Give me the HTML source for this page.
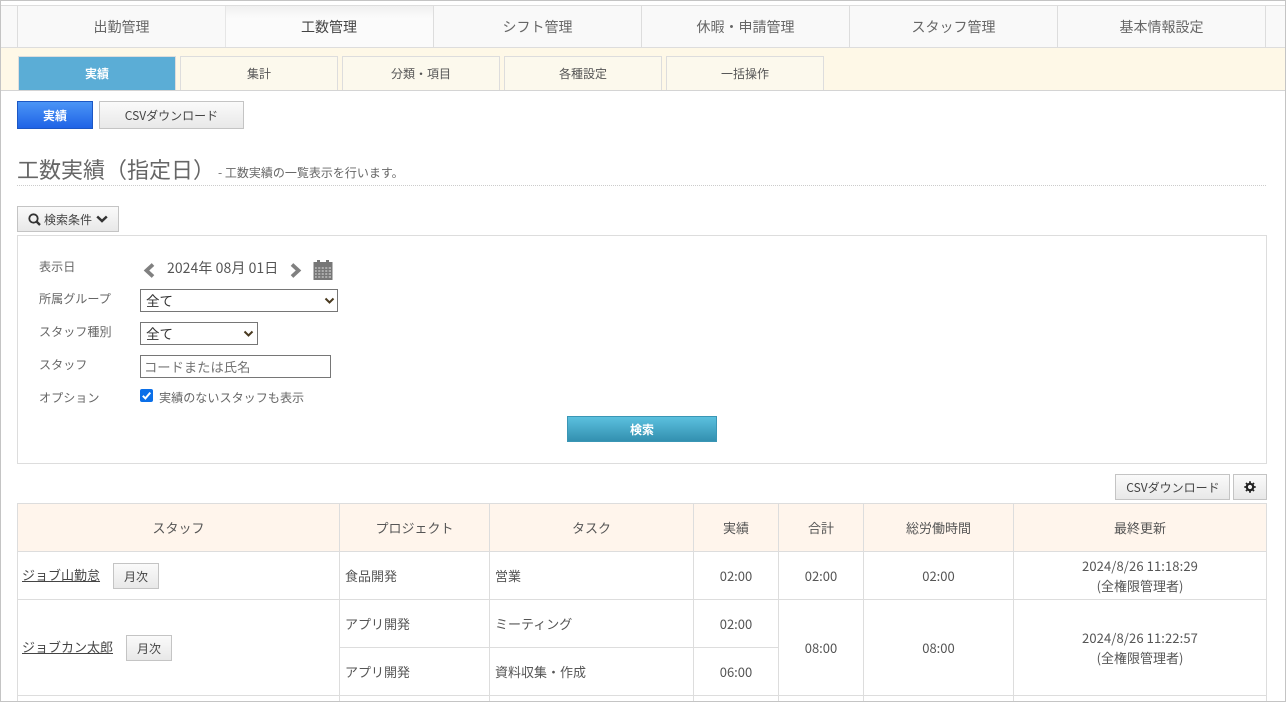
<!DOCTYPE html>
<html lang="ja"><head><meta charset="utf-8"><title>工数実績</title>
<style>
html,body{margin:0;padding:0;background:#fff}
#p{position:relative;width:1286px;height:702px;overflow:hidden;background:#fff;font-family:"Noto Sans CJK JP","Liberation Sans",sans-serif;color:#555;font-size:12px}
#p div,#p a,#p span.a,#p svg,#p select,#p input{position:absolute;box-sizing:border-box}
.c{display:flex;align-items:center;justify-content:center;white-space:nowrap}
.t{background:#f9f9f9;border-right:1px solid #ddd;font-size:14px;color:#666;top:6px;height:41px}
.s{top:56px;height:34px;background:#fcf9ed;border:1px solid #ddd;border-bottom:0;color:#555;font-size:12px;width:158px}
.b{background:linear-gradient(#fafafa,#e8e8e8);border:1px solid #c4c4c4;color:#444;font-size:12px}
.l{left:39px;font-size:12.1px;color:#666;white-space:nowrap;line-height:16px}
.h{background:#fff5ec;color:#555;font-size:13px;top:504px;height:47px}
.v{width:1px;background:#ddd}
.o{height:1px;background:#ddd}
.d{font-size:13px;line-height:18px;color:#555;white-space:nowrap}
a.n{color:#444;text-decoration:underline;font-size:13px;white-space:nowrap;line-height:16px}
</style></head><body><div id="p">
<div style="left:0;top:5px;width:1286px;height:43px;background:#f9f9f9;border-top:1px solid #ddd;border-bottom:1px solid #ddd"></div>
<div class="v" style="left:17px;top:6px;height:41px"></div>
<div class="t c" style="left:18px;width:208px">出勤管理</div>
<div class="t c" style="left:225px;width:209px;background:linear-gradient(#f0f0f0,#fbfbfb 30%);color:#444;border-left:1px solid #e6e6e6;padding-right:1px">工数管理</div>
<div class="t c" style="left:434px;width:208px">シフト管理</div>
<div class="t c" style="left:642px;width:208px">休暇・申請管理</div>
<div class="t c" style="left:850px;width:208px">スタッフ管理</div>
<div class="t c" style="left:1058px;width:208px">基本情報設定</div>

<div style="left:0;top:48px;width:1286px;height:43px;background:#fef8e7;border-bottom:1px solid #d4d4d4"></div>
<div class="s c" style="left:18px;background:#5badd6;color:#fff;font-weight:700">実績</div>
<div class="s c" style="left:180px">集計</div>
<div class="s c" style="left:342px">分類・項目</div>
<div class="s c" style="left:504px">各種設定</div>
<div class="s c" style="left:666px">一括操作</div>

<div class="c" style="left:17px;top:101px;width:76px;height:28px;background:linear-gradient(#4b95f6,#1f63e6);border:1px solid #1c57c4;color:#fff;font-weight:700;font-size:12px">実績</div>
<div class="b c" style="left:99px;top:101px;width:145px;height:28px">CSVダウンロード</div>

<div style="left:17px;top:153px;font-size:22px;line-height:32px;color:#666;white-space:nowrap">工数実績（指定日）</div>
<div style="left:218px;top:165px;font-size:12px;line-height:16px;color:#666;white-space:nowrap">- 工数実績の一覧表示を行います。</div>
<div style="left:17px;top:185px;width:1249px;border-top:1px dotted #ccc;height:1px"></div>

<div class="b c" style="left:17px;top:206px;width:102px;height:26px;color:#444">
<svg style="position:static;margin-right:3px" width="13" height="13" viewBox="0 0 13 13"><circle cx="5.500" cy="5.500" r="4.200" fill="none" stroke="#333" stroke-width="1.800"/><path d="M8.500 8.500L12 12" stroke="#333" stroke-width="2.300"/></svg>検索条件<svg style="position:static;margin-left:4px" width="12" height="8" viewBox="0 0 12 8"><path d="M1.200 1.500L6 6 10.800 1.500" fill="none" stroke="#333" stroke-width="2.500"/></svg></div>

<div style="left:17px;top:235px;width:1250px;height:229px;border:1px solid #ddd;background:#fff"></div>
<div class="l" style="top:259px">表示日</div>
<svg style="left:143px;top:263px" width="13" height="15" viewBox="0 0 13 15"><path d="M10 1.500L3.500 7.500 10 13.500" fill="none" stroke="#808080" stroke-width="3.800"/></svg>
<div style="left:167px;top:259px;font-size:14px;letter-spacing:.07px;line-height:18px;color:#555;white-space:nowrap">2024年 08月 01日</div>
<svg style="left:289px;top:263px" width="13" height="15" viewBox="0 0 13 15"><path d="M3 1.500L9.500 7.500 3 13.500" fill="none" stroke="#808080" stroke-width="3.800"/></svg>
<svg style="left:313px;top:260px" width="20" height="20" viewBox="0 0 20 20"><rect x="0.500" y="2" width="19" height="18" fill="#777"/><rect x="4" y="0" width="3" height="4" fill="#777"/><rect x="13" y="0" width="3" height="4" fill="#777"/><path d="M2 8h16M2 11h16M2 14h16M2 17h16" stroke="#ccc" stroke-width="1.200" fill="none"/><path d="M4.500 7v11M8 7v11M11.500 7v11M15 7v11" stroke="#777" stroke-width="1.400" fill="none"/></svg>

<div class="l" style="top:291px">所属グループ</div>
<div style="left:140px;top:289px;width:198px;height:23px;border:1px solid #767676;font-size:13.500px;line-height:21px;padding-left:5px;color:#333;background:#fff">全て</div>
<svg style="left:324px;top:297px" width="11" height="8" viewBox="0 0 11 8"><path d="M1.500 1.500L5.500 5.500 9.500 1.500" fill="none" stroke="#4a3a20" stroke-width="2"/></svg>
<div class="l" style="top:324px">スタッフ種別</div>
<div style="left:140px;top:322px;width:118px;height:23px;border:1px solid #767676;font-size:13.500px;line-height:21px;padding-left:5px;color:#333;background:#fff">全て</div>
<svg style="left:243px;top:330px" width="11" height="8" viewBox="0 0 11 8"><path d="M1.500 1.500L5.500 5.500 9.500 1.500" fill="none" stroke="#4a3a20" stroke-width="2"/></svg>
<div class="l" style="top:357px">スタッフ</div>
<div style="left:140px;top:355px;width:191px;height:23px;border:1px solid #767676;font-size:13.300px;line-height:21px;padding-left:3px;color:#757575;background:#fff">コードまたは氏名</div>
<div class="l" style="top:390px">オプション</div>
<div style="left:140px;top:389px;width:13px;height:13px;background:#0b6fe8;border-radius:2px"></div>
<svg style="left:140px;top:389px" width="13" height="13" viewBox="0 0 13 13"><path d="M2.800 6.800L5.400 9.400 10.300 3.600" fill="none" stroke="#fff" stroke-width="2"/></svg>
<div style="left:159px;top:390px;font-size:12.100px;line-height:16px;color:#666;white-space:nowrap">実績のないスタッフも表示</div>
<div class="c" style="left:567px;top:416px;width:150px;height:26px;background:linear-gradient(#5bc0de,#3390b0);border:1px solid #3a96b5;color:#fff;font-weight:700;font-size:12px">検索</div>

<div class="b c" style="left:1115px;top:474px;width:115px;height:26px;padding-left:1px">CSVダウンロード</div>
<div class="b c" style="left:1233px;top:474px;width:34px;height:26px">
<svg style="position:static" width="12" height="12" viewBox="0 0 12 12"><circle cx="6" cy="6" r="3.200" fill="none" stroke="#222" stroke-width="2.200"/><path d="M6 .3v2.400M6 9.300v2.400M.3 6h2.400M9.300 6h2.400M2 2l1.700 1.700M8.300 8.300L10 10M10 2L8.300 3.700M3.700 8.300L2 10" stroke="#222" stroke-width="1.800"/></svg></div>

<div class="h c" style="left:18px;width:321px">スタッフ</div>
<div class="h c" style="left:340px;width:149px">プロジェクト</div>
<div class="h c" style="left:490px;width:203px">タスク</div>
<div class="h c" style="left:694px;width:84px">実績</div>
<div class="h c" style="left:779px;width:84px">合計</div>
<div class="h c" style="left:864px;width:149px">総労働時間</div>
<div class="h c" style="left:1014px;width:252px">最終更新</div>

<div class="o" style="left:17px;top:503px;width:1250px"></div>
<div class="o" style="left:17px;top:551px;width:1250px"></div>
<div class="o" style="left:17px;top:599px;width:1250px"></div>
<div class="o" style="left:340px;top:647px;width:439px"></div>
<div class="o" style="left:17px;top:695px;width:1250px"></div>
<div class="v" style="left:17px;top:503px;height:199px"></div>
<div class="v" style="left:339px;top:503px;height:199px"></div>
<div class="v" style="left:489px;top:503px;height:199px"></div>
<div class="v" style="left:693px;top:503px;height:199px"></div>
<div class="v" style="left:778px;top:503px;height:199px"></div>
<div class="v" style="left:863px;top:503px;height:199px"></div>
<div class="v" style="left:1013px;top:503px;height:199px"></div>
<div class="v" style="left:1266px;top:503px;height:199px"></div>

<a class="n" style="left:22px;top:567px">ジョブ山勤怠</a>
<div class="b c" style="left:113px;top:563px;width:46px;height:26px">月次</div>
<a class="n" style="left:22px;top:639px">ジョブカン太郎</a>
<div class="b c" style="left:126px;top:635px;width:46px;height:26px">月次</div>

<div class="d" style="left:345px;top:567px">食品開発</div>
<div class="d" style="left:345px;top:615px">アプリ開発</div>
<div class="d" style="left:345px;top:663px">アプリ開発</div>
<div class="d" style="left:495px;top:567px">営業</div>
<div class="d" style="left:495px;top:615px">ミーティング</div>
<div class="d" style="left:495px;top:663px">資料収集・作成</div>

<div class="d c" style="left:694px;width:84px;top:567px">02:00</div>
<div class="d c" style="left:694px;width:84px;top:615px">02:00</div>
<div class="d c" style="left:694px;width:84px;top:663px">06:00</div>
<div class="d c" style="left:779px;width:84px;top:567px">02:00</div>
<div class="d c" style="left:779px;width:84px;top:639px">08:00</div>
<div class="d c" style="left:864px;width:149px;top:567px">02:00</div>
<div class="d c" style="left:864px;width:149px;top:639px">08:00</div>
<div class="d c" style="left:1014px;width:252px;top:557px;letter-spacing:.1px">2024/8/26 11:18:29</div>
<div class="d c" style="left:1014px;width:252px;top:577px">(全権限管理者)</div>
<div class="d c" style="left:1014px;width:252px;top:629px;letter-spacing:.1px">2024/8/26 11:22:57</div>
<div class="d c" style="left:1014px;width:252px;top:649px">(全権限管理者)</div>

<div style="left:0;top:0;width:1286px;height:702px;border:1px solid #c4c4c4;pointer-events:none"></div>
</div></body></html>
